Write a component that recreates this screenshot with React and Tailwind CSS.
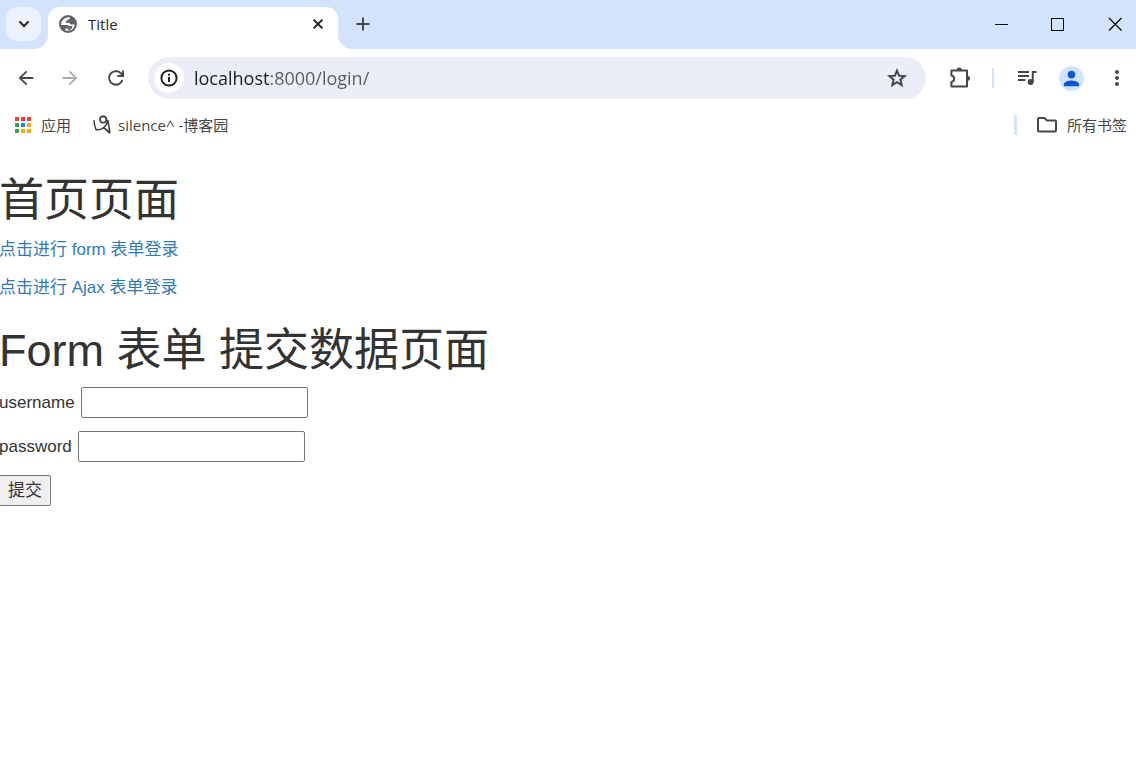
import React from 'react';
import {
  MdArrowBack,
  MdArrowForward,
  MdPerson,
  MdMoreVert,
} from 'react-icons/md';

const appDots = [
  'bg-[#f44336]', 'bg-[#f44336]', 'bg-[#f44336]',
  'bg-[#34a05a]', 'bg-[#1e88e5]', 'bg-[#f9ab00]',
  'bg-[#34a05a]', 'bg-[#f9ab00]', 'bg-[#f9ab00]',
];

const GlobeIcon = () => (
  <svg viewBox="0 0 18 18" className="size-[18px]">
    <circle cx="9" cy="9" r="9" fill="#5f6368" />
    <path
      d="M10.6 2.2 C11.4 3.6 10.4 4.4 9.2 4.6 C8 4.8 8.2 5.8 7.2 6.2 C6.2 6.6 6.2 7.8 7.4 7.8 H10 C11 7.8 11 9.6 12.2 9.6 H15.8 C15.6 13 12.6 15.8 9 15.9 C8 15.9 7 15.7 6.2 15.3 V13.6 H8.4 C9.6 13.6 9.8 12.8 9.8 11.8 C9.8 10.4 8.8 10 7.6 10 H2.2 C1.8 5.6 5.8 1.8 10.6 2.2 Z"
      fill="#fff"
    />
    <path d="M9.8 11 H12.4 C13.4 11 13.4 13 12.4 13.8 C11.4 14.6 10.4 15.4 9.4 15.9 L9 13.4 Z" fill="#5f6368" />
  </svg>
);

const RefreshIcon = () => (
  <svg viewBox="0 0 18 18" className="size-[18px]" fill="none" stroke="#474747" strokeWidth="2">
    <path d="M15.4 11 A6.8 6.8 0 1 1 14 4.4 L16 6.6" />
    <path d="M16 1.4 V7 H10.4" />
  </svg>
);

const InfoIcon = () => (
  <svg viewBox="0 0 18 18" className="size-[18px]" fill="none" stroke="#1f1f1f" strokeWidth="2">
    <circle cx="9" cy="9" r="7.6" />
    <path d="M9 8 V13 M9 4.8 V6.8" />
  </svg>
);

const StarIcon = () => (
  <svg viewBox="0 0 24 24" className="size-6" fill="none" stroke="#474747" strokeWidth="2">
    <path d="M12 4.6 L14.1 9.7 L19.6 10.1 L15.4 13.7 L16.7 19.1 L12 16.2 L7.3 19.1 L8.6 13.7 L4.4 10.1 L9.9 9.7 Z" />
  </svg>
);

const PuzzleIcon = () => (
  <svg viewBox="0 0 22 22" className="size-[22px]" fill="none" stroke="#474747" strokeWidth="2" strokeLinejoin="round">
    <path d="M2.4 3.6 H18 V19.6 H2.4 V15 C6 14.4 6 9 2.4 8.4 Z" />
    <path d="M7.8 3 A2.5 2.5 0 0 1 12.8 3 Z M18.6 9 A2.5 2.5 0 0 1 18.6 14 Z" fill="#474747" stroke="none" />
  </svg>
);

const QueueIcon = () => (
  <svg viewBox="0 0 20 16" className="h-4 w-5" fill="none" stroke="#474747" strokeWidth="2">
    <path d="M1 2 H12 M1 6 H12 M1 10 H8.4" />
    <path d="M15.8 12 V2 H19.6" />
    <circle cx="13.6" cy="12" r="3" fill="#474747" stroke="none" />
  </svg>
);

const BlogIcon = () => (
  <svg viewBox="0 0 18 20" className="h-5 w-[18px]" fill="none" stroke="#3a3a3a" strokeLinecap="round">
    <circle cx="10.2" cy="4.6" r="3.2" strokeWidth="1.6" />
    <path d="M1 5.8 C1.2 9 1.6 12 3.2 14.8 C6 15 8.6 14.4 10.4 12.8 C12.4 11 14.6 9 14.6 5.4" strokeWidth="1.5" />
    <path d="M14.8 5.6 C15.8 9.6 16.4 13.6 16.8 18.4 C15.4 15.6 13.6 14.6 10.6 12.8" strokeWidth="1.6" />
  </svg>
);

const FolderIcon = () => (
  <svg viewBox="0 0 22 18" className="h-[18px] w-[22px]" fill="none" stroke="#474747" strokeWidth="2" strokeLinejoin="round">
    <path d="M3 2 H8.5 L11 4.5 H19 Q20 4.5 20 5.5 V14.5 Q20 15.5 19 15.5 H3 Q2 15.5 2 14.5 V3 Q2 2 3 2 Z" />
  </svg>
);

const TabStrip = () => (
  <header className="flex h-[49px] items-start bg-[#d3e3fd] pl-1.5">
    <button type="button" aria-label="搜索标签页" className="mt-[7px] mr-[7px] grid h-[34px] w-[35px] place-items-center rounded-xl bg-[#ebf1fe]">
      <svg viewBox="0 0 12 8" className="h-2 w-3" fill="none" stroke="#1f1f1f" strokeWidth="2">
        <path d="M1.4 1.4 L6 6 L10.6 1.4" />
      </svg>
    </button>
    <div className="relative mt-[7px] flex h-[42px] w-[290px] items-center rounded-t-xl bg-white pr-3.5 pb-2 pl-[11px] text-[#1f1f1f]">
      {/* flared feet of the active tab */}
      <svg viewBox="0 0 14 14" className="absolute bottom-0 -left-3.5 size-3.5"><path d="M14 0 A14 14 0 0 1 0 14 H14 Z" fill="#fff" /></svg>
      <svg viewBox="0 0 14 14" className="absolute -right-3.5 bottom-0 size-3.5"><path d="M0 0 A14 14 0 0 0 14 14 H0 Z" fill="#fff" /></svg>
      <GlobeIcon />
      <span className="ml-[11px] flex-1 text-[15px]">Title</span>
      <button type="button" aria-label="关闭标签页">
        <svg viewBox="0 0 12 12" className="size-3" fill="none" stroke="#1f1f1f" strokeWidth="2">
          <path d="M1.6 1.6 L10.4 10.4 M10.4 1.6 L1.6 10.4" />
        </svg>
      </button>
    </div>
    <button type="button" aria-label="新标签页" className="ml-[18px] h-12">
      <svg viewBox="0 0 14 14" className="size-3.5" fill="none" stroke="#474747" strokeWidth="2">
        <path d="M7 0.5 V13.5 M0.5 7 H13.5" />
      </svg>
    </button>
    <div className="ml-auto flex h-12 items-center gap-[43px] pr-3.5">
      <button type="button" aria-label="最小化">
        <svg viewBox="0 0 14 14" className="size-3.5" stroke="#000"><path d="M1 7.5 H14" /></svg>
      </button>
      <button type="button" aria-label="最大化">
        <svg viewBox="0 0 14 14" className="size-3.5" fill="none" stroke="#000"><rect x="0.5" y="1.5" width="12" height="12" /></svg>
      </button>
      <button type="button" aria-label="关闭">
        <svg viewBox="0 0 14 14" className="size-3.5" stroke="#000" strokeWidth="1.2"><path d="M1 1 L13.5 13.5 M13.5 1 L1 13.5" /></svg>
      </button>
    </div>
  </header>
);

const Toolbar = () => (
  <div className="flex h-[58px] items-center pr-[7px] pl-[15px] text-[#474747]">
    <button type="button" aria-label="后退" className="mr-[22px]"><MdArrowBack className="size-[22px]" /></button>
    <button type="button" aria-label="前进" className="mr-[26px] text-[#ababab]"><MdArrowForward className="size-[22px]" /></button>
    <button type="button" aria-label="重新加载" className="mr-[23px]"><RefreshIcon /></button>
    <div className="flex h-[42px] flex-1 items-center rounded-full bg-[#ebeef8] pr-[17px] pl-1.5">
      <button type="button" aria-label="网站信息" className="grid size-[30px] place-items-center rounded-full bg-white">
        <InfoIcon />
      </button>
      <input
        type="text"
        aria-label="地址"
        defaultValue="localhost:8000/login/"
        className="ml-2.5 min-w-0 flex-1 bg-[linear-gradient(90deg,#1f1f1f_76px,#5a5a5a_76px)] bg-clip-text text-lg text-transparent outline-none"
      />
      <button type="button" aria-label="添加书签"><StarIcon /></button>
    </div>
    <button type="button" aria-label="扩展程序" className="ml-[23px]"><PuzzleIcon /></button>
    <span className="mx-[21px] h-5 w-0.5 bg-[#d3e3fd]" />
    <button type="button" aria-label="媒体控件" className="ml-0.5"><QueueIcon /></button>
    <button type="button" aria-label="个人资料" className="ml-[22px] grid size-[25px] place-items-center rounded-full bg-[#d3e3fd] text-[#0b57d0]">
      <MdPerson className="size-[23px]" />
    </button>
    <button type="button" aria-label="菜单" className="ml-[21px]"><MdMoreVert className="size-6" /></button>
  </div>
);

const BookmarksBar = () => (
  <nav className="flex h-9 items-center pr-[9px] pl-[15px] text-[15px] text-[#474747]">
    <a href="#" className="flex items-center gap-2.5">
      <span className="grid grid-cols-3 gap-0.5">
        {appDots.map((dot, i) => (
          <span key={i} className={`size-1 ${dot}`} />
        ))}
      </span>
      应用
    </a>
    <a href="#" className="ml-[22px] flex items-center gap-[7px]">
      <BlogIcon />
      silence^ -博客园
    </a>
    <span className="ml-auto h-5 w-[3px] bg-[#d3e3fd]" />
    <a href="#" className="ml-[19px] flex items-center gap-[9px]">
      <FolderIcon />
      所有书签
    </a>
  </nav>
);

const LoginPage = () => (
  <main className="-ml-px pt-[33px] font-['Liberation_Sans','Noto_Sans_CJK_SC',sans-serif] text-[17px] leading-[25px] text-[#333]">
    <h1 className="mb-[11px] text-[45px] leading-[50px]">首页页面</h1>
    <p className="mb-[13px]"><a href="#" className="text-[#337ab7]">点击进行 form 表单登录</a></p>
    <p><a href="#" className="text-[#337ab7]">点击进行 Ajax 表单登录</a></p>
    <h1 className="mt-[26px] mb-[11px] text-[45px] leading-[50px]">Form 表单 提交数据页面</h1>
    <form className="flex flex-col items-start gap-[13px]" onSubmit={(e) => e.preventDefault()}>
      <div className="flex items-center gap-1.5">
        <label htmlFor="username">username</label>
        <input id="username" type="text" className="h-[31px] w-[227px] rounded-xs border border-[#767676] px-0.5" />
      </div>
      <div className="flex items-center gap-1.5">
        <label htmlFor="password">password</label>
        <input id="password" type="password" className="h-[31px] w-[227px] rounded-xs border border-[#767676] px-0.5" />
      </div>
      <button type="submit" className="h-[31px] rounded-xs border border-[#767676] bg-[#efefef] px-2">提交</button>
    </form>
  </main>
);

export default function App() {
  return (
    <div className="min-h-screen overflow-x-hidden bg-white font-['Open_Sans','Noto_Sans_CJK_SC',sans-serif]">
      <TabStrip />
      <Toolbar />
      <BookmarksBar />
      <LoginPage />
    </div>
  );
}
